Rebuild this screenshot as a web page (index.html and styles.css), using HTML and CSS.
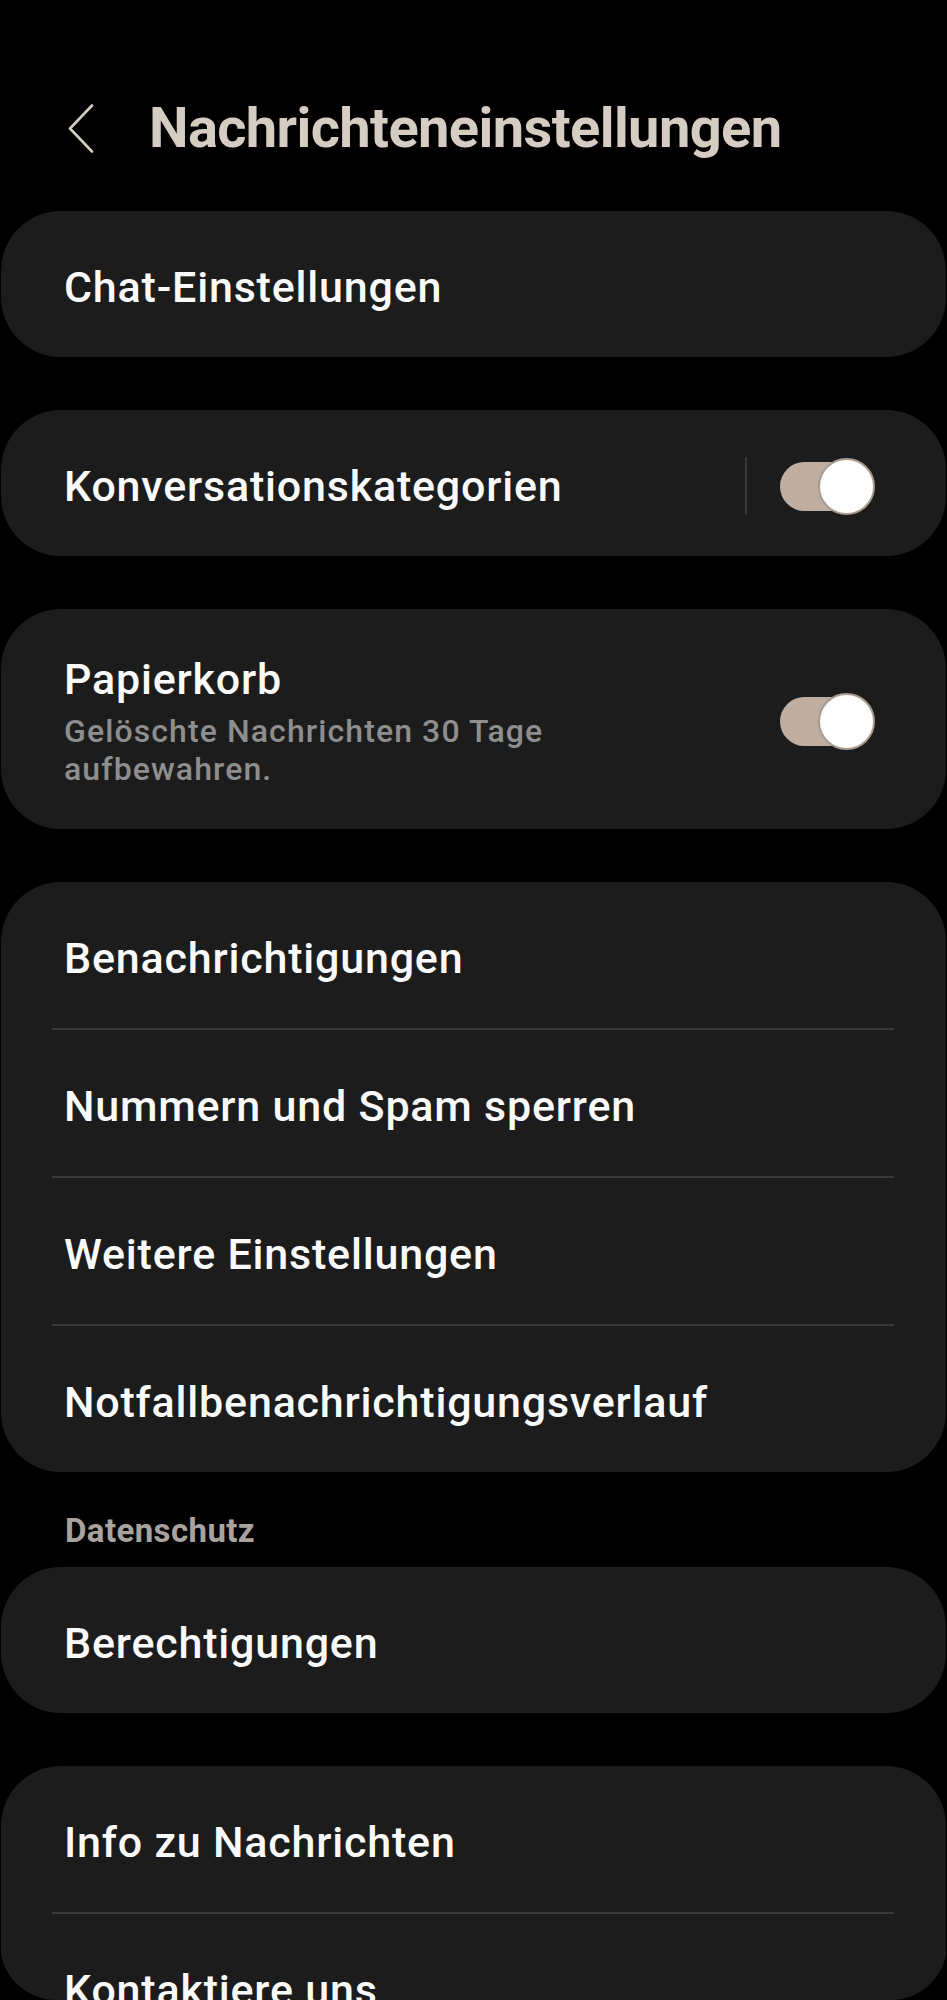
FILE: index.html
```html
<!DOCTYPE html>
<html lang="de">
<head>
    <meta charset="UTF-8">
    <meta name="viewport" content="width=device-width, initial-scale=1.0">
    <title>Nachrichteneinstellungen</title>
    <link rel="stylesheet" href="styles.css">
</head>
<body>
    <div class="screen">
        <header class="app-bar">
            <button class="back-button" aria-label="Zurück">
                <svg width="26" height="49" viewBox="0 0 26 49">
                    <polyline points="24,1.5 2,24.5 24,47.5" fill="none" stroke="#d5ccc2" stroke-width="2.6" stroke-linecap="round" stroke-linejoin="round"/>
                </svg>
            </button>
            <h1>Nachrichteneinstellungen</h1>
        </header>

        <div class="settings">
            <div class="card">
                <div class="row">Chat-Einstellungen</div>
            </div>

            <div class="card">
                <div class="row">
                    <span class="row-title">Konversationskategorien</span>
                    <span class="vertical-divider"></span>
                    <span class="switch on"><span class="knob"></span></span>
                </div>
            </div>

            <div class="card">
                <div class="row row-tall">
                    <div class="row-text">
                        <div class="row-title">Papierkorb</div>
                        <div class="row-summary">Gelöschte Nachrichten 30 Tage aufbewahren.</div>
                    </div>
                    <span class="switch on"><span class="knob"></span></span>
                </div>
            </div>

            <div class="card">
                <div class="row">Benachrichtigungen</div>
                <div class="divider"></div>
                <div class="row">Nummern und Spam sperren</div>
                <div class="divider"></div>
                <div class="row">Weitere Einstellungen</div>
                <div class="divider"></div>
                <div class="row">Notfallbenachrichtigungsverlauf</div>
            </div>

            <div class="section-label">Datenschutz</div>

            <div class="card">
                <div class="row">Berechtigungen</div>
            </div>

            <div class="card">
                <div class="row">Info zu Nachrichten</div>
                <div class="divider"></div>
                <div class="row">Kontaktiere uns</div>
            </div>
        </div>
    </div>
</body>
</html>
```

FILE: styles.css
```css
body {
    margin: 0;
    background-color: #000;
    font-family: Roboto, "Noto Sans", sans-serif;
    color: #fafafa;
}

.screen {
    height: 2000px;
    overflow: hidden;
    background-color: #000;
    border-radius: 0 0 56px 56px;
}

.app-bar {
    display: flex;
    align-items: center;
    height: 96px;
    padding-top: 80px;
}

.back-button {
    display: flex;
    align-items: center;
    margin-left: 68px;
    padding: 0;
    border: none;
    background: none;
}

h1 {
    margin: 0 0 0 55px;
    font-size: 56px;
    font-weight: 700;
    color: #d5ccc2;
    letter-spacing: -0.6px;
}

.settings {
    padding: 35px 1px 0 1px;
}

.card {
    background-color: #1c1c1c;
    border-radius: 60px;
    overflow: hidden;
}

.card + .card {
    margin-top: 53px;
}

.row {
    display: flex;
    align-items: center;
    box-sizing: border-box;
    min-height: 146px;
    padding: 6px 71px 0 63px;
    font-size: 43px;
    font-weight: 500;
    line-height: 50px;
    letter-spacing: 0.8px;
}

.row-title {
    flex: 1;
}

.row-tall {
    min-height: 0;
    padding-top: 45px;
    padding-bottom: 41px;
}

.row-text {
    flex: 1;
}

.row-summary {
    max-width: 560px;
    margin-top: 8px;
    font-size: 32px;
    line-height: 38px;
    letter-spacing: 1.1px;
    color: #8e8e8e;
}

.divider {
    height: 2px;
    margin: 0 52px 0 51px;
    background-color: #3a3a3a;
}

.vertical-divider {
    width: 2px;
    height: 58px;
    margin-right: 33px;
    background-color: #3a3a3a;
}

.switch {
    position: relative;
    width: 95px;
    height: 57px;
    flex-shrink: 0;
}

.switch::before {
    content: "";
    position: absolute;
    left: 0;
    top: 4px;
    width: 88px;
    height: 49px;
    border-radius: 25px;
    background-color: #bfae9f;
}

.knob {
    position: absolute;
    right: 0;
    top: 0;
    width: 53px;
    height: 53px;
    border: 2px solid #a89b8e;
    border-radius: 50%;
    background-color: #fdfdfd;
}

.section-label {
    margin: 39px 0 16px 0;
    padding-left: 64px;
    font-size: 33px;
    line-height: 40px;
    font-weight: 700;
    letter-spacing: 0.4px;
    color: #a8a39e;
}
```
